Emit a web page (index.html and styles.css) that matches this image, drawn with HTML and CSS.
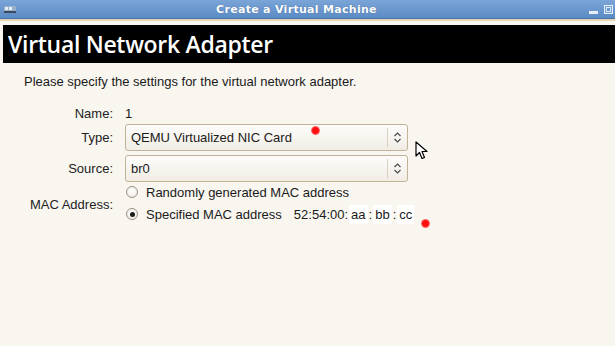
FILE: index.html
```html
<!DOCTYPE html>
<html>
<head>
<meta charset="utf-8">
<link rel="stylesheet" href="styles.css">
</head>
<body>
<div class="window">
  <div class="titlebar">
    <div class="tb-icon">
      <svg width="14" height="10" viewBox="0 0 14 10"><rect x="1" y="2" width="12" height="6" fill="#9ab0c8"/><rect x="2" y="3" width="3" height="3" fill="#e8eef6"/><rect x="6" y="3" width="3" height="3" fill="#e8eef6"/><rect x="1" y="7" width="12" height="2" fill="#3a4a60"/></svg>
    </div>
    <div class="tb-title">Create a Virtual Machine</div>
    <div class="tb-buttons">
      <span class="tb-min"></span>
      <span class="tb-max"></span>
    </div>
  </div>
  <div class="sep"></div>
  <div class="banner">Virtual Network Adapter</div>
  <div class="content">
    <p class="intro">Please specify the settings for the virtual network adapter.</p>
    <div class="form">
      <div class="label">Name:</div>
      <div class="value name-value">1</div>

      <div class="label">Type:</div>
      <div class="combo">
        <span class="combo-text">QEMU Virtualized NIC Card</span>
        <span class="combo-arrow"><svg width="9" height="13" viewBox="0 0 9 13"><path d="M1.5 5 L4.5 2 L7.5 5 M1.5 8 L4.5 11 L7.5 8" fill="none" stroke="#4a4a4a" stroke-width="1.2"/></svg></span>
      </div>

      <div class="label">Source:</div>
      <div class="combo">
        <span class="combo-text">br0</span>
        <span class="combo-arrow"><svg width="9" height="13" viewBox="0 0 9 13"><path d="M1.5 5 L4.5 2 L7.5 5 M1.5 8 L4.5 11 L7.5 8" fill="none" stroke="#4a4a4a" stroke-width="1.2"/></svg></span>
      </div>

      <div class="label mac-label">MAC Address:</div>
      <div class="radios">
        <div class="radio-row"><span class="radio"></span><span>Randomly generated MAC address</span></div>
        <div class="radio-row"><span class="radio checked"></span><span>Specified MAC address</span>
          <span class="mac"><span>52:54:00:</span><span class="oct">aa</span><span>:</span><span class="oct">bb</span><span>:</span><span class="oct">cc</span></span>
        </div>
      </div>
    </div>
  </div>
  <span class="dot dot1"></span>
  <span class="dot dot2"></span>
  <svg class="cursor" width="14" height="20" viewBox="0 0 14 20"><path d="M1 1 L1 15 L4.5 11.5 L7 17.5 L9.5 16.5 L7 10.5 L12 10.5 Z" fill="#fff" stroke="#000" stroke-width="1.2" stroke-linejoin="round"/></svg>
</div>
</body>
</html>
```
FILE: styles.css
```css
html, body {
  margin: 0;
  padding: 0;
}
body {
  width: 615px;
  height: 346px;
  overflow: hidden;
  background: #f9f6f0;
  font-family: "Liberation Sans", Arial, sans-serif;
  font-size: 13px;
  color: #1a1a1a;
}
.window {
  position: relative;
  width: 615px;
  height: 346px;
}
.titlebar {
  height: 18px;
  background: linear-gradient(#7ba5d8, #5b8bc4);
  display: flex;
  align-items: center;
  border-bottom: 1px solid #4a74a8;
}
.tb-icon {
  width: 20px;
  padding-left: 3px;
  display: flex;
  align-items: center;
}
.tb-title {
  flex: 1;
  text-align: center;
  color: #fff;
  font-family: "DejaVu Sans", sans-serif;
  font-weight: bold;
  font-size: 11px;
  letter-spacing: 0.3px;
  text-shadow: 0 0 1px #3d6090;
  padding-right: 3px;
}
.tb-buttons {
  width: 40px;
  display: flex;
  align-items: center;
  justify-content: flex-end;
  gap: 6px;
  padding-right: 2px;
}
.tb-min {
  width: 9px;
  height: 3px;
  background: #e8eef8;
  margin-top: 7px;
}
.tb-max {
  width: 9px;
  height: 9px;
  border: 1px solid #e8eef8;
  box-sizing: border-box;
  box-shadow: inset 0 0 0 1px #7ba5d8, inset 0 0 0 2px #dbe6f4;
}
.sep {
  height: 2px;
  background: #e4d6b4;
  margin-bottom: 4px;
}
.banner {
  margin-left: 3px;
  height: 38px;
  background: #000;
  color: #fff;
  font-family: "Open Sans", "DejaVu Sans", sans-serif;
  font-weight: 600;
  font-size: 23px;
  line-height: 38px;
  padding-left: 5px;
  letter-spacing: -0.3px;
}
.content {
  padding-left: 24px;
}
.intro {
  margin: 11px 0 0 0;
  line-height: 15px;
  font-size: 13px;
}
.form {
  display: grid;
  grid-template-columns: 89px auto;
  column-gap: 12px;
  margin-top: 17px;
  align-items: center;
  justify-items: start;
}
.label {
  justify-self: end;
  text-align: right;
  color: #222;
}
.name-value {
  line-height: 16px;
}
.form .label:nth-child(1) {
  line-height: 16px;
}
.combo {
  width: 283px;
  height: 27px;
  box-sizing: border-box;
  border: 1px solid #bfb39a;
  border-radius: 3px;
  background: linear-gradient(#fdfcfa, #f1ede5);
  display: flex;
  align-items: center;
  margin-top: 2px;
  margin-bottom: 2px;
}
.combo-text {
  flex: 1;
  padding-left: 5px;
}
.combo-arrow {
  width: 19px;
  height: 19px;
  border-left: 1px solid #d8d0c0;
  display: flex;
  align-items: center;
  justify-content: center;
}
.radios {
  display: flex;
  flex-direction: column;
  margin-top: -3px;
}
.radio-row {
  display: flex;
  align-items: center;
  height: 22px;
  padding-left: 1px;
  white-space: nowrap;
}
.radio {
  width: 12px;
  height: 12px;
  box-sizing: border-box;
  border: 1px solid #9a9284;
  border-radius: 50%;
  background: radial-gradient(circle at 50% 40%, #fff, #ece8e0);
  margin-right: 8px;
  position: relative;
}
.radio.checked::after {
  content: "";
  position: absolute;
  left: 2.5px;
  top: 2.5px;
  width: 5px;
  height: 5px;
  border-radius: 50%;
  background: #1a1a1a;
}
.mac {
  display: flex;
  align-items: center;
  margin-left: 12px;
}
.oct {
  background: #fff;
  padding: 2px 2px;
  margin: 0 1px;
}
.dot {
  position: absolute;
  width: 9px;
  height: 9px;
  border-radius: 50%;
  background: radial-gradient(circle, #ff1010 45%, rgba(255,60,60,0.5) 75%, rgba(255,100,100,0) 100%);
}
.dot1 {
  left: 311px;
  top: 126px;
}
.dot2 {
  left: 421px;
  top: 219px;
}
.cursor {
  position: absolute;
  left: 415px;
  top: 141px;
}
```
